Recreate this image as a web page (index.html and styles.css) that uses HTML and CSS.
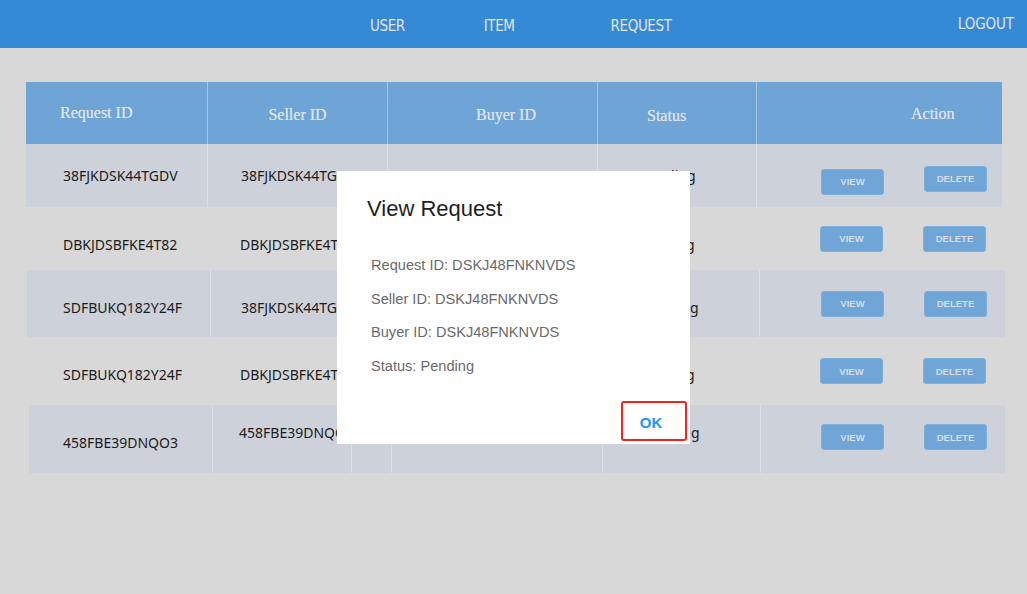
FILE: index.html
```html
<!DOCTYPE html>
<html lang="en">
<head>
<meta charset="utf-8">
<title>Requests</title>
<link rel="stylesheet" href="styles.css">
</head>
<body>
<header class="topbar">
  <nav class="nav-links">
    <a class="nav-link">USER</a>
    <a class="nav-link">ITEM</a>
    <a class="nav-link nav-request">REQUEST</a>
  </nav>
  <a class="nav-link logout">LOGOUT</a>
</header>

<main class="content">
  <div class="table">
    <div class="row head">
      <div class="cell h-req">Request ID</div>
      <div class="cell h-seller">Seller ID</div>
      <div class="cell h-buyer">Buyer ID</div>
      <div class="cell h-status">Status</div>
      <div class="cell h-action">Action</div>
    </div>

    <div class="row r1 striped">
      <div class="cell c1">38FJKDSK44TGDV</div>
      <div class="cell c2">38FJKDSK44TGDV</div>
      <div class="cell c3"></div>
      <div class="cell c4">Pending</div>
      <div class="cell act"><button class="btn">VIEW</button><button class="btn btn-del">DELETE</button></div>
    </div>

    <div class="row r2">
      <div class="cell c1">DBKJDSBFKE4T82</div>
      <div class="cell c2">DBKJDSBFKE4T82</div>
      <div class="cell c3"></div>
      <div class="cell c4">Pending</div>
      <div class="cell act"><button class="btn">VIEW</button><button class="btn btn-del">DELETE</button></div>
    </div>

    <div class="row r3 striped">
      <div class="cell c1">SDFBUKQ182Y24F</div>
      <div class="cell c2">38FJKDSK44TGDV</div>
      <div class="cell c3"></div>
      <div class="cell c4">Pending</div>
      <div class="cell act"><button class="btn">VIEW</button><button class="btn btn-del">DELETE</button></div>
    </div>

    <div class="row r4">
      <div class="cell c1">SDFBUKQ182Y24F</div>
      <div class="cell c2">DBKJDSBFKE4T82</div>
      <div class="cell c3"></div>
      <div class="cell c4">Pending</div>
      <div class="cell act"><button class="btn">VIEW</button><button class="btn btn-del">DELETE</button></div>
    </div>

    <div class="row r5 striped">
      <div class="cell c1">458FBE39DNQO3</div>
      <div class="cell c2">458FBE39DNQO3</div>
      <div class="cell c2b"></div>
      <div class="cell c3"></div>
      <div class="cell c4">Pending</div>
      <div class="cell act"><button class="btn">VIEW</button><button class="btn btn-del">DELETE</button></div>
    </div>
  </div>
</main>

<div class="overlay">
  <div class="modal">
    <h2 class="modal-title">View Request</h2>
    <div class="modal-body">
      <p class="line">Request ID: DSKJ48FNKNVDS</p>
      <p class="line">Seller ID: DSKJ48FNKNVDS</p>
      <p class="line">Buyer ID: DSKJ48FNKNVDS</p>
      <p class="line">Status: Pending</p>
    </div>
    <div class="modal-foot">
      <button class="ok">OK</button>
    </div>
  </div>
</div>
</body>
</html>
```

FILE: styles.css
```css
* { box-sizing: border-box; }

body {
  margin: 0;
  background: #d8d8d8;
  font-family: "Noto Sans", "Liberation Sans", sans-serif;
  width: 1027px;
  height: 594px;
  overflow: hidden;
}

/* top bar */
.topbar {
  height: 48px;
  background: #358ad6;
  display: flex;
  align-items: center;
  padding-right: 13px;
}
.nav-links {
  display: flex;
  gap: 79px;
  padding-left: 370px;
  padding-top: 4px;
}
.nav-link {
  color: #e2e4e8;
  font-family: "DejaVu Sans Condensed", "DejaVu Sans", sans-serif;
  font-stretch: condensed;
  font-size: 15px;
  letter-spacing: -0.4px;
  text-decoration: none;
}
.nav-request { margin-left: 17px; }
.logout {
  margin-left: auto;
  padding-bottom: 1px;
  letter-spacing: -0.1px;
}

/* table */
.content {
  padding: 34px 0 0 26px;
}
.table {
  display: flex;
  flex-direction: column;
}
.row {
  display: grid;
  grid-template-columns: 181px 180px 210px 159px 246px;
  width: 976px;
}
.cell {
  display: flex;
  align-items: center;
  font-size: 14px;
  color: #1b1b1b;
  white-space: nowrap;
  overflow: hidden;
}
.head {
  height: 62px;
  background: #6fa5d6;
}
.head .cell {
  font-family: "Liberation Serif", "Times New Roman", serif;
  font-size: 16px;
  color: #dbe2ea;
  border-left: 1px solid #a7c6e3;
  text-shadow: 0 0 0.4px #dbe2ea;
}
.head .cell:first-child { border-left: none; }
.h-req { padding-left: 34px; padding-bottom: 1px; }
.h-seller { justify-content: center; padding-top: 4px; }
.h-buyer { padding-left: 88px; padding-top: 4px; }
.h-status { padding-left: 49px; padding-top: 5px; }
.h-action { padding-left: 154px; padding-top: 2px; }

.striped { background: #cdd2da; }
.striped .cell + .cell { border-left: 1px solid #dcdfe4; }

.r1 { height: 63px; }
.r2 { height: 63px; }
.r3 { height: 67px; width: 978px; margin-left: 1px; grid-template-columns: 183px 180px 210px 159px 246px; }
.r4 { height: 68px; }
.r5 { height: 68px; width: 976px; margin-left: 3px; grid-template-columns: 183px 139px 40px 211px 158px 245px; }

.c1 { padding-left: 37px; }
.c2 { padding-left: 33px; }
.c4 { padding-left: 43px; }

.r2 .c1, .r2 .c2, .r2 .c4 { padding-top: 11px; }
.r3 .c1, .r3 .c2, .r3 .c4 { padding-top: 7px; }
.r3 .c1 { padding-left: 36px; }
.r3 .c2 { padding-left: 30px; }
.r4 .c1, .r4 .c2, .r4 .c4 { padding-top: 7px; }
.r5 .c1 { padding-top: 6px; padding-left: 34px; }
.r5 .c2 { padding-left: 26px; padding-bottom: 14px; }
.r5 .c4 { padding-left: 42px; padding-bottom: 14px; }

.act {
  padding-left: 64px;
  gap: 40px;
}
.r1 .act { padding-top: 12px; }
.r1 .btn-del { margin-bottom: 6px; }
.r3 .act { padding-left: 61px; }
.r5 .act { padding-left: 60px; padding-bottom: 4px; }

.btn {
  width: 63px;
  height: 26px;
  background: #6fa6d7;
  border: 1px solid #7eafdb;
  border-radius: 3px;
  color: #d6dde6;
  font-family: "Liberation Sans", Arial, sans-serif;
  font-weight: bold;
  font-size: 9.5px;
  padding: 0;
}

/* modal */
.overlay {
  position: absolute;
  inset: 0;
}
.modal {
  position: absolute;
  left: 337px;
  top: 171px;
  width: 353px;
  height: 273px;
  background: #ffffff;
  display: flex;
  flex-direction: column;
  font-family: "Liberation Sans", Arial, sans-serif;
}
.modal-title {
  margin: 25px 0 0 30px;
  font-size: 22px;
  font-weight: normal;
  line-height: 25px;
  color: #1e1e1e;
}
.modal-body {
  margin-top: 28px;
  padding-left: 34px;
}
.line {
  margin: 0;
  font-size: 14.6px;
  line-height: 33.6px;
  color: #6a6a6a;
}
.modal-foot {
  margin-top: auto;
  display: flex;
  justify-content: flex-end;
  padding: 0 3px 3px 0;
}
.ok {
  width: 66px;
  height: 40px;
  border: 2px solid #f2231c;
  border-radius: 3px;
  background: #ffffff;
  color: #2196f3;
  font-family: "Liberation Sans", Arial, sans-serif;
  font-weight: bold;
  font-size: 15px;
  padding: 2px 6px 0 0;
}
```
